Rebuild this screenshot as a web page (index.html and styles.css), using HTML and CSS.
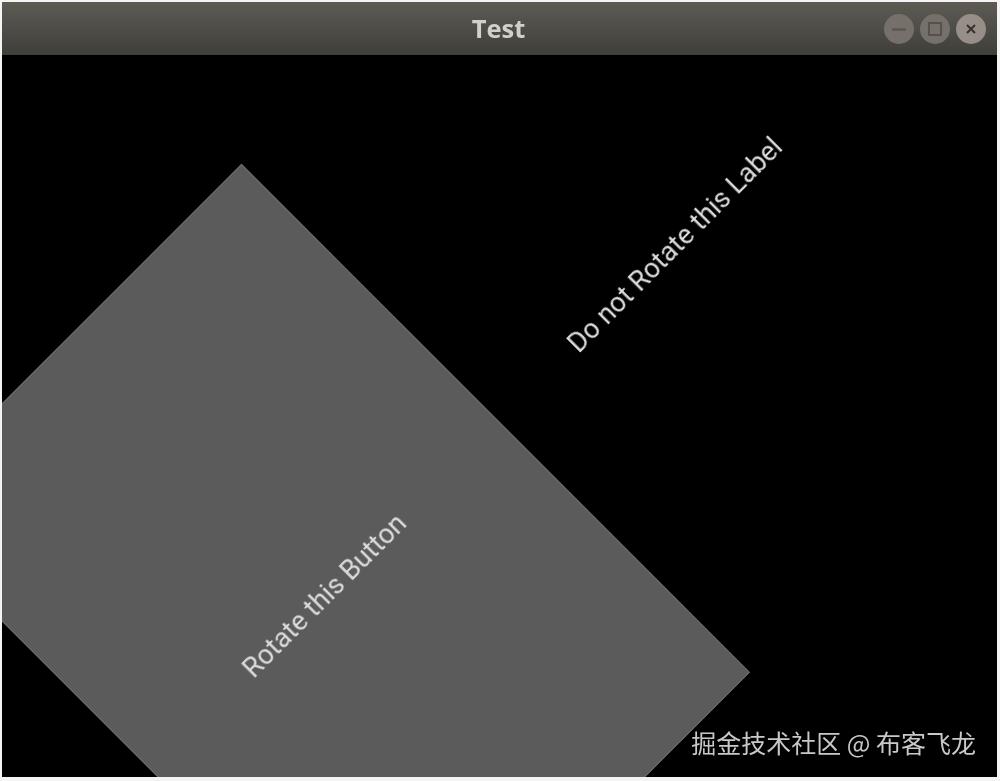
FILE: index.html
```html
<!DOCTYPE html>
<html lang="en">
<head>
<meta charset="utf-8">
<title>Test</title>
<link rel="stylesheet" href="styles.css">
</head>
<body>
<div class="window">
  <header class="titlebar">
    <span class="title">Test</span>
    <div class="controls">
      <button class="ctl"><svg viewBox="0 0 30 30" width="30" height="30"><path d="M8 15.5H22" stroke="#5d5850" stroke-width="2.5" fill="none"/></svg></button>
      <button class="ctl"><svg viewBox="0 0 30 30" width="30" height="30"><rect x="9" y="9" width="12" height="12" stroke="#56524b" stroke-width="2" fill="none"/></svg></button>
      <button class="ctl close"><svg viewBox="0 0 30 30" width="30" height="30"><path d="M11 11L19 19M19 11L11 19" stroke="#34322f" stroke-width="2" fill="none"/></svg></button>
    </div>
  </header>
  <main class="canvas">
    <div class="rotated-button"><span>Rotate this Button</span></div>
    <div class="rotated-label">Do not Rotate this Label</div>
    <div class="watermark">掘金技术社区 @ 布客飞龙</div>
  </main>
</div>
</body>
</html>
```
FILE: styles.css
```css
html, body {
  margin: 0;
  height: 100%;
  background: #f4f4f4;
  overflow: hidden;
}
.window {
  width: 995px;
  height: 775px;
  margin: 2px 0 0 2px;
  display: flex;
  flex-direction: column;
}
.titlebar {
  position: relative;
  flex: 0 0 53px;
  display: flex;
  justify-content: flex-end;
  align-items: center;
  background: linear-gradient(#5e5b55, #3f3e39);
}
.title {
  position: absolute;
  left: 0;
  right: 2px;
  padding-bottom: 2px;
  text-align: center;
  font: 700 25.5px "Open Sans", "Noto Sans", sans-serif;
  color: #d2d0ca;
  filter: blur(0.5px);
}
.controls {
  display: flex;
  gap: 6px;
  padding-right: 11px;
}
.ctl {
  width: 30px;
  height: 30px;
  padding: 0;
  border: 0;
  border-radius: 50%;
  background: #75716a;
  display: flex;
  filter: blur(0.7px);
}
.ctl.close {
  background: #968e87;
}
.canvas {
  position: relative;
  flex: 1;
  background: #000;
  overflow: hidden;
}
.rotated-button {
  position: absolute;
  box-sizing: border-box;
  left: 73.25px;
  top: 177.5px;
  width: 492.5px;
  height: 719px;
  padding-top: 8px;
  transform: rotate(-45deg);
  background: #5b5b5b;
  border: 1px solid #6c6c6c;
  display: flex;
  align-items: center;
  justify-content: center;
  font: 400 27.3px Roboto, sans-serif;
  color: #dcdcdc;
}
.rotated-button span {
  filter: blur(0.5px);
}
.rotated-label {
  position: absolute;
  left: 523px;
  top: 171.5px;
  width: 300px;
  text-align: center;
  white-space: nowrap;
  transform: rotate(-45deg);
  font: 400 27.3px/36px Roboto, sans-serif;
  color: #dcdcdc;
  filter: blur(0.5px);
}
.watermark {
  position: absolute;
  right: 21px;
  bottom: 17px;
  font: 400 25px "Noto Sans CJK SC", "Noto Sans", sans-serif;
  color: #c8c8c8;
  white-space: nowrap;
  filter: blur(0.4px);
}
```
